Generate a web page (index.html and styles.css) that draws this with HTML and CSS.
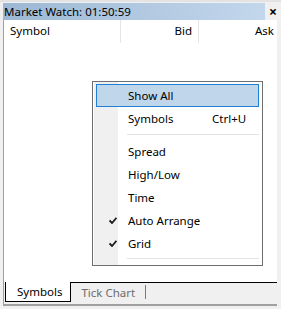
FILE: index.html
```html
<!DOCTYPE html>
<html>
<head>
<meta charset="utf-8">
<link rel="stylesheet" href="styles.css">
</head>
<body>
<div class="window">
  <div class="titlebar">
    <div class="title">Market Watch: 01:50:59</div>
    <div class="close">×</div>
  </div>
  <div class="panel">
    <div class="header">
      <div class="col col-symbol">Symbol</div>
      <div class="col col-bid">Bid</div>
      <div class="col col-ask">Ask</div>
    </div>
    <div class="list"></div>
  </div>
  <div class="tabs">
    <div class="tab active">Symbols</div>
    <div class="tab">Tick Chart</div>
    <div class="tab-sep"></div>
    <div class="tab-rest"></div>
  </div>
  <div class="menu">
    <div class="item hl"><span class="check"></span><span class="label">Show All</span></div>
    <div class="item"><span class="check"></span><span class="label">Symbols</span><span class="key">Ctrl+U</span></div>
    <div class="sep"></div>
    <div class="item"><span class="check"></span><span class="label">Spread</span></div>
    <div class="item"><span class="check"></span><span class="label">High/Low</span></div>
    <div class="item"><span class="check"></span><span class="label">Time</span></div>
    <div class="item"><span class="check"><svg width="8" height="7" viewBox="0 0 8 7"><path d="M0.5 3.5 L3 6 L7.5 0.8" fill="none" stroke="#1a1a1a" stroke-width="1.8"/></svg></span><span class="label">Auto Arrange</span></div>
    <div class="item"><span class="check"><svg width="8" height="7" viewBox="0 0 8 7"><path d="M0.5 3.5 L3 6 L7.5 0.8" fill="none" stroke="#1a1a1a" stroke-width="1.8"/></svg></span><span class="label">Grid</span></div>
    <div class="sep last"></div>
  </div>
</div>
</body>
</html>
```
FILE: styles.css
```css
* { box-sizing: border-box; }
html, body { margin: 0; padding: 0; }
body {
  font-family: "Noto Sans", "Liberation Sans", Arial, sans-serif;
  font-size: 11.5px;
  color: #000;
  background: #f0f0f0;
}
.window {
  position: relative;
  width: 281px;
  height: 309px;
  background: #f0f0f0;
  border-top: 2px solid #e3e3e3;
  padding-top: 1px;
  display: flex;
  flex-direction: column;
}
.titlebar {
  display: flex;
  height: 17px;
  margin-left: 3px;
}
.title {
  flex: 1;
  background: linear-gradient(to right, #9db8d4, #c3d7ec);
  padding-left: 1px;
  line-height: 17px;
  color: #000;
}
.close {
  width: 16px;
  text-align: center;
  font-weight: bold;
  font-size: 14px;
  line-height: 17px;
}
.panel {
  margin-left: 3px;
  margin-right: 4px;
  background: #fff;
  border-left: 1px solid #a0a0a0;
  flex: 1;
  display: flex;
  flex-direction: column;
}
.header {
  display: flex;
  height: 23px;
}
.col {
  line-height: 22px;
  border-right: 1px solid #e5e5e5;
  padding: 0 6px;
}
.col-symbol { width: 117px; }
.col-bid { width: 78px; text-align: right; }
.col-ask { flex: 1; text-align: right; border-right: none; padding-right: 3px; }
.list { flex: 1; }
.tabs {
  display: flex;
  height: 24px;
  margin-left: 3px;
  margin-right: 4px;
  background: #f0f0f0;
  border-left: 1px solid #a0a0a0;
  border-bottom: 2px solid #a0a0a0;
  margin-bottom: 3px;
}
.tab {
  line-height: 19px;
  padding: 0 10px;
  color: #6d6d6d;
  border-top: 1px solid #000;
}
.tab.active {
  background: #fff;
  color: #000;
  border: 1px solid #000;
  border-top: none;
  margin-left: 1px;
  height: 20px;
  padding: 0 8px 0 11px;
}
.tab-sep {
  width: 1px;
  height: 14px;
  margin-top: 3px;
  background: #7a7a7a;
}
.tab-rest {
  flex: 1;
  border-top: 1px solid #000;
  margin-left: -1px;
}
.menu {
  position: absolute;
  left: 92px;
  top: 79px;
  width: 171px;
  height: 185px;
  background: #fff;
  border: 1px solid #6e6e6e;
  padding: 2px 3px 2px 3px;
  background-image: linear-gradient(to right, #f0f0f0 0, #f0f0f0 24px, transparent 24px);
  background-position: 1px 0;
  background-repeat: no-repeat;
}
.item {
  display: flex;
  align-items: center;
  height: 23px;
  border: 1px solid transparent;
}
.item.hl {
  background: #c0d6ea;
  border-color: #1f7fd4;
}
.check {
  width: 31px;
  display: flex;
  justify-content: center;
  padding-left: 1px;
}
.label { flex: 1; }
.key { width: 46px; }
.sep {
  height: 1px;
  background: #e3e3e3;
  margin: 4px 0 5px 31px;
}
.sep.last { margin-top: 3px; }
```
